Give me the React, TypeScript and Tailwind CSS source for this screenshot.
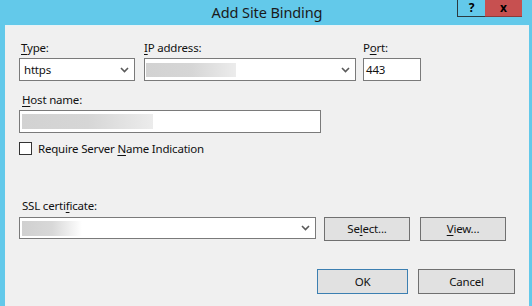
import { FC, ReactNode } from "react";

const font = { fontFamily: '"Segoe UI", "Noto Sans", sans-serif' };

const Chevron: FC = () => (
  <svg width="9" height="6" viewBox="0 0 9 6" className="shrink-0">
    <path d="M1 1 L4.5 4.5 L8 1" fill="none" stroke="#5a5a5a" strokeWidth="1.6" />
  </svg>
);

const Blur: FC<{ cls: string }> = ({ cls }) => (
  <div className={`${cls} bg-gradient-to-r from-[#d2d2d2] via-[#d6d6d6] to-[#ececec]`} />
);

const U: FC<{ children: ReactNode }> = ({ children }) => (
  <span className="underline underline-offset-2 decoration-1">{children}</span>
);

const Btn: FC<{ children: ReactNode; cls: string }> = ({ children, cls }) => (
  <div className={`flex items-center justify-center bg-[#e1e1e1] border text-[#111] ${cls}`}>
    {children}
  </div>
);

const App: FC = () => {
  return (
    <div className="w-[532px] h-[306px] bg-[#63c9ea] flex flex-col overflow-hidden" style={font}>
      {/* title bar */}
      <div className="relative h-[25px] shrink-0 flex items-center justify-center">
        <span className="text-[14.5px] tracking-[-0.1px] text-[#1a1a1a] pl-[2px]">Add Site Binding</span>
        <div className="absolute top-0 right-[10px] flex">
          <div className="w-[28px] h-[17px] border-l border-b border-[#2b3a40] flex items-center justify-center text-[12px] font-bold text-black">
            ?
          </div>
          <div className="w-[37px] h-[17px] bg-[#c75050] border-b border-[#8b3a3a] flex items-center justify-center text-[12px] font-bold text-black">
            x
          </div>
        </div>
      </div>

      {/* client */}
      <div className="flex-1 ml-[5px] mr-[3px] bg-[#f0f0f0] border-t border-[#e6f2f6] pl-[14px] pr-[14px] pt-[14px] text-[11.5px] tracking-[-0.2px] leading-[16px] text-[#111]">
        <div className="flex">
          <div className="w-[116px] flex flex-col">
            <div className="h-[16px] pl-[2px]">
              <U>T</U>ype:
            </div>
            <div className="mt-[2px] h-[23px] bg-white border border-[#7a7a7a] flex items-center justify-between pl-[4px] pr-[5px]">
              <span>https</span>
              <Chevron />
            </div>
          </div>
          <div className="w-[212px] ml-[9px] flex flex-col">
            <div className="h-[16px]">
              <U>I</U>P address:
            </div>
            <div className="mt-[2px] h-[23px] bg-white border border-[#7a7a7a] flex items-center justify-between pl-[1px] pr-[5px]">
              <Blur cls="w-[90px] h-[14px]" />
              <Chevron />
            </div>
          </div>
          <div className="w-[58px] ml-[7px] flex flex-col">
            <div className="h-[16px]">
              P<U>o</U>rt:
            </div>
            <div className="mt-[2px] h-[23px] bg-white border border-[#7a7a7a] flex items-center pl-[2px]">
              443
            </div>
          </div>
        </div>

        <div className="mt-[11px] h-[16px] pl-[3px]">
          <U>H</U>ost name:
        </div>
        <div className="mt-[2px] w-[302px] h-[23px] bg-white border border-[#7a7a7a] flex items-center pl-[2px]">
          <Blur cls="w-[131px] h-[15px]" />
        </div>

        <div className="mt-[9px] h-[13px] flex items-center">
          <div className="w-[13px] h-[13px] bg-white border border-[#333]" />
          <span className="ml-[6px]">
            Require Server <U>N</U>ame Indication
          </span>
        </div>

        <div className="mt-[43px] h-[16px] pl-[3px]">
          SSL certi<U>f</U>icate:
        </div>
        <div className="mt-[3px] flex items-start">
          <div className="w-[297px] h-[22px] bg-white border border-[#7a7a7a] flex items-center justify-between pl-[2px] pr-[5px]">
            <div className="w-[60px] h-[15px] bg-gradient-to-r from-[#d0d0d0] via-[#d8d8d8] to-white" />
            <Chevron />
          </div>
          <Btn cls="ml-[8px] w-[86px] h-[24px] border-[#707070]">
            <span>
              Se<U>l</U>ect...
            </span>
          </Btn>
          <Btn cls="ml-[10px] w-[86px] h-[24px] border-[#707070]">
            <span>
              <U>V</U>iew...
            </span>
          </Btn>
        </div>

        <div className="mt-[28px] flex justify-end">
          <Btn cls="w-[91px] h-[25px] border-[#3c7fb1]">OK</Btn>
          <Btn cls="ml-[10px] w-[97px] h-[25px] border-[#707070]">Cancel</Btn>
        </div>
      </div>
    </div>
  );
};

export default App;
